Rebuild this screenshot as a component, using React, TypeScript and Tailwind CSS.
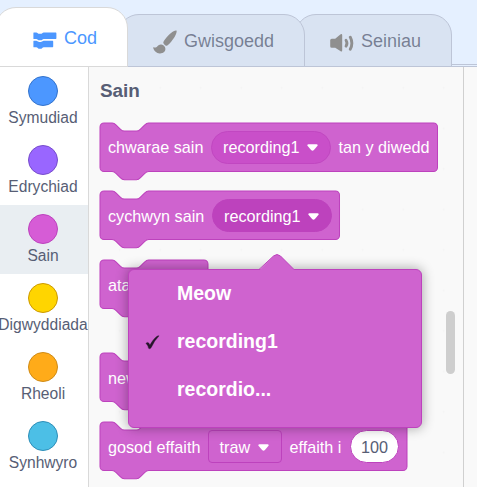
import type { ReactNode } from 'react';

const CATEGORIES = [
  { name: 'Symudiad', fill: 'bg-[#4c97ff]', ring: 'border-[#3373cc]' },
  { name: 'Edrychiad', fill: 'bg-[#9966ff]', ring: 'border-[#774dcb]' },
  { name: 'Sain', fill: 'bg-[#d65cd6]', ring: 'border-[#bd42bd]', active: true },
  { name: 'Digwyddiada', fill: 'bg-[#ffd500]', ring: 'border-[#cc9900]' },
  { name: 'Rheoli', fill: 'bg-[#ffab19]', ring: 'border-[#cf8b17]' },
  { name: 'Synhwyro', fill: 'bg-[#4cbfe6]', ring: 'border-[#2e8eb8]' },
];

function CodeIcon() {
  return (
    <svg className="mt-[7px] block h-[18px] w-6" viewBox="0 0 24 18" fill="#4c97ff">
      <path d="M.8 .5H3.400Q4 .5 4.500 1L5 1.400Q5.500 1.800 6.200 1.800H7.800Q8.500 1.800 9 1.400L9.500 1Q10 .5 10.600 .5H22.800Q23.400 .5 23.400 1.200V6.300Q23.400 7 22.800 7H10.600Q10 7 9.500 7.500L9 7.900Q8.500 8.300 7.800 8.300H6.200Q5.500 8.300 5 7.900L4.500 7.500Q4 7 3.400 7H.8Q.4 7 .4 6.500V1Q.4 .5 .8 .5Z" />
      <path d="M.8 8.700H3.400Q4 8.700 4.500 9.200L5 9.600Q5.500 10 6.200 10H7.800Q8.500 10 9 9.600L9.500 9.200Q10 8.700 10.600 8.700H19.600Q20.200 8.700 20.200 9.400V14.500Q20.200 15.200 19.600 15.200H10.600Q10 15.200 9.500 15.700L9 16.200Q8.500 16.800 7.800 16.800H6.200Q5.500 16.800 5 16.200L4.500 15.700Q4 15.200 3.400 15.200H.8Q.4 15.200 .4 14.700V9.200Q.4 8.700 .8 8.700Z" />
    </svg>
  );
}

function BrushIcon() {
  return (
    <svg className="mt-[2px] block size-6" viewBox="0 0 24 24" fill="#8f8f8f">
      <path d="M23.500 .6C21 .1 18.300 2.500 15.500 5.200C13 7.700 10.600 10.700 10.300 12.300C10.200 13 10.600 13.700 11.300 14.500C12.200 15.400 12.900 15.900 13.700 15.700C15.200 15.300 18 12.300 20 9.300C22.400 5.900 24.200 2.300 23.500 .6Z" />
      <path d="M8.400 14.500C6.300 14.300 4.800 15.300 4 16.800C3.500 17.700 1.800 17.800 .6 17.300C.2 17.200 .1 17.600 .3 18.200C1.100 21 3.500 23.200 6.600 23.400C10 23.600 12.500 21.700 12.400 18.800C12.300 16.600 10.700 14.700 8.400 14.500Z" />
    </svg>
  );
}

function SpeakerIcon() {
  return (
    <svg className="mt-[5px] block size-6" viewBox="0 0 24 24" fill="none">
      <path d="M1.700 7.800H5.200L10.300 3.400Q12.200 2.200 12.200 4.200V19.300Q12.200 21.300 10.300 20L5.200 16.800H1.700Q.2 16.800 .2 15.300V9.300Q.2 7.800 1.700 7.800Z" fill="#8f8f8f" />
      <path d="M16 9.200Q18 12.200 16 15.200" stroke="#8f8f8f" strokeWidth="2.800" strokeLinecap="round" />
      <path d="M20.300 6.200Q23.400 12.200 20.300 18.200" stroke="#8f8f8f" strokeWidth="2.900" strokeLinecap="round" />
    </svg>
  );
}

function Caret() {
  return (
    <svg className="block h-[7px] w-[11px] shrink-0" viewBox="0 0 11 7" fill="#fff">
      <path d="M1.500 .2H9.500Q11.300 .6 10.300 2.100L6.900 6Q5.500 7.300 4.100 6L.7 2.100Q-.3 .6 1.500 .2Z" />
    </svg>
  );
}

function Block({ width, className, children }: { width: number; className: string; children: ReactNode }) {
  const r = width / 1.0125 - 4;
  return (
    <div className={`relative flex h-[49px] shrink-0 items-center whitespace-nowrap pl-2 text-[16.2px] text-white ${className}`} style={{ width }}>
      <svg className="absolute top-0 left-0 overflow-visible" width={width} height="58">
        <path
          transform="scale(1.0125)"
          fill="#cf63cf"
          stroke="#bd42bd"
          d={`M0 4A4 4 0 0 1 4 0H12c2 0 3 1 4 2l4 4c1 1 2 2 4 2h12c2 0 3-1 4-2l4-4c1-1 2-2 4-2H${r}a4 4 0 0 1 4 4v40a4 4 0 0 1-4 4H48c-2 0-3 1-4 2l-4 4c-1 1-2 2-4 2h-12c-2 0-3-1-4-2l-4-4c-1-1-2-2-4-2H4a4 4 0 0 1-4-4z`}
        />
      </svg>
      {children}
    </div>
  );
}

function SoundField({ open }: { open?: boolean }) {
  return (
    <span className={`relative flex h-[33px] w-[119.500px] shrink-0 items-center justify-between rounded-full border pr-[12px] pl-[11px] ${open ? 'border-[#bd42bd] bg-[#bd42bd] pt-px' : 'border-[#c147c1] bg-[#c94fc9]'}`}>
      recording1
      <Caret />
    </span>
  );
}

function SoundMenu() {
  return (
    <div className="absolute top-[269px] left-[128px] h-[159px] w-[294px] rounded-md border border-[#bd42bd] bg-[#cf63cf] text-[19.5px] font-bold text-white shadow-[0_0_12px_1px_rgba(0,0,0,0.3)]">
      <svg className="absolute top-[-17px] left-[129px]" width="38" height="19">
        <path d="M1 17.500L15.500 3Q19 0 22.500 3L37 17.500V19H1Z" fill="#cf63cf" />
        <path d="M1 16.500L15.500 3Q19 0 22.500 3L36 16.500" fill="none" stroke="#bd42bd" />
      </svg>
      {['Meow', 'recording1', 'recordio...'].map((name) => (
        <div key={name} className="flex h-12 items-center">
          <span className="flex w-12 shrink-0 pl-[16px]">
            {name === 'recording1' && (
              <svg className="block h-[17px] w-[15px]" viewBox="0 0 16 17" fill="#26152a" stroke="#26152a" strokeWidth="0.4">
                <path d="M1 9.300Q2.800 7.700 4 9L5.200 11.200Q8.800 4.600 12.500 2Q13.700 1.200 15 1.400Q10 6.500 6.500 14Q5.200 16 3.800 14.700Q3.200 11.500 1 9.300Z" />
              </svg>
            )}
          </span>
          {name}
        </div>
      ))}
    </div>
  );
}

function Workspace() {
  return (
    <main className="relative flex flex-1 flex-col bg-[#f9f9f9] bg-[radial-gradient(circle_at_center,#f4f4f4_0.8px,transparent_1.3px)] bg-[length:40.5px_40.5px] bg-[position:10.500px_0.5px] pl-[11px]">
      <h1 className="mt-[12px] h-6 text-[18.9px] leading-6 font-bold text-[#575e75]">Sain</h1>
      <Block width={337.5} className="mt-[19.5px]">
        <span className="relative w-[103px]">chwarae sain</span>
        <SoundField />
        <span className="relative ml-2">tan y diwedd</span>
      </Block>
      <Block width={239.5} className="mt-[19.5px]">
        <span className="relative mt-px w-[104px]">cychwyn sain</span>
        <SoundField open />
      </Block>
      <Block width={108} className="mt-5">
        <span className="relative mt-px">atal pob sain</span>
      </Block>
      <Block width={306} className="mt-[43.500px]">
        <span className="relative mt-[2px]">newid effaith</span>
      </Block>
      <Block width={307} className="mt-5">
        <span className="relative mt-[2px] w-[100px]">gosod effaith</span>
        <span className="relative flex h-[33px] w-[74px] items-center justify-between rounded border border-[#bd42bd] pt-[2px] pr-[12px] pl-[10.5px]">
          traw
          <Caret />
        </span>
        <span className="relative mt-[2px] ml-[7.500px] w-[60.500px]">effaith i</span>
        <span className="relative flex h-[33px] w-[49px] items-center justify-center rounded-full border border-[#bd42bd] bg-white pt-[2px] text-[#575e75]">100</span>
      </Block>
    </main>
  );
}

export default function App() {
  return (
    <div className="relative flex h-[487px] w-[477px] flex-col overflow-hidden bg-[#e5f0ff] font-['Liberation_Sans',Arial,sans-serif]">
      <header className="flex h-[67px] items-end border-b border-[#bdc5d7] text-[18px] text-[#575e75]/75">
        <div className="z-20 -mb-px -ml-[5px] flex h-[60px] w-[133px] shrink-0 items-center rounded-t-[21px] border border-[#d9d9d9] bg-white pl-[37px] text-[#4c97ff]">
          <CodeIcon />
          <span className="mt-[2px] ml-[7px]">Cod</span>
        </div>
        <div className="z-10 -mb-px -ml-[10px] flex h-[53px] w-[187px] shrink-0 items-center rounded-t-[21px] border border-[#bdc5d7] bg-[#d9e3f2] pl-[34px]">
          <BrushIcon />
          <span className="mt-[2px] ml-[7px]">Gwisgoedd</span>
        </div>
        <div className="-mb-px -ml-[10px] flex h-[53px] w-[157px] shrink-0 items-center rounded-t-[21px] border border-[#bdc5d7] bg-[#d9e3f2] pl-[34px]">
          <SpeakerIcon />
          <span className="mt-[2px] ml-[7px]">Seiniau</span>
        </div>
        <div className="h-[2px] flex-1 border-t border-[#bdc5d7] bg-[#e5f0ff]" />
      </header>
      <div className="flex min-h-0 flex-1">
        <nav className="flex w-[89px] shrink-0 flex-col border-r border-[#d9d9d9] bg-white">
          {CATEGORIES.map((c) => (
            <div key={c.name} className={`flex h-[69px] shrink-0 flex-col items-center pt-[9px] pr-[2px] ${c.active ? 'bg-[#e9eef2]' : ''}`}>
              <span className={`size-[30px] shrink-0 rounded-full border ${c.fill} ${c.ring}`} />
              <span className="mt-[3px] text-[15.6px] leading-[18px] whitespace-nowrap text-[#575e75]">{c.name}</span>
            </div>
          ))}
        </nav>
        <Workspace />
        <aside className="w-[14px] shrink-0 border-l border-[#d0d0d0] bg-[#f9f9f9]" />
      </div>
      <div className="absolute top-[310.500px] left-[446px] h-[63px] w-[9px] rounded-full bg-[#cecece]" />
      <SoundMenu />
    </div>
  );
}
